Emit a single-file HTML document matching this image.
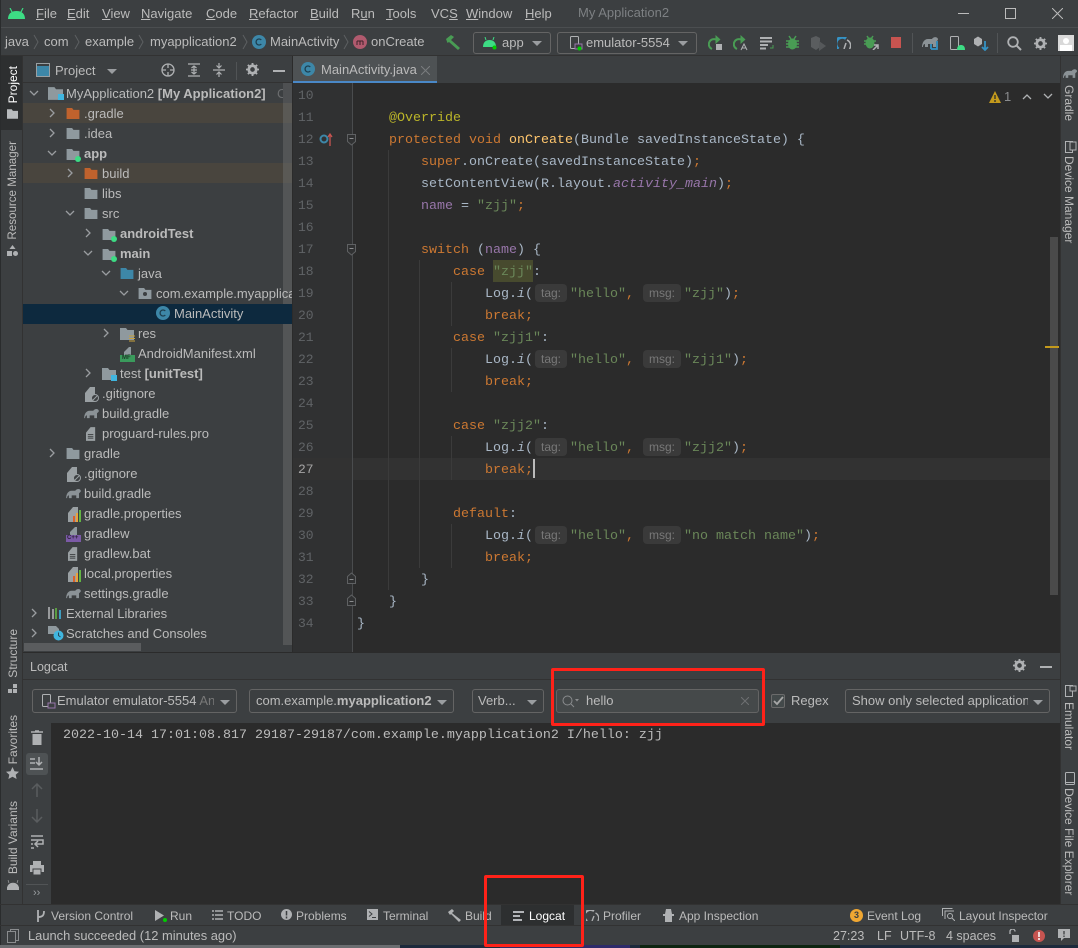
<!DOCTYPE html>
<html><head><meta charset="utf-8"><style>
html,body{margin:0;padding:0;background:#3c3f41}
#r{position:relative;width:1078px;height:948px;overflow:hidden;background:#3c3f41;font-family:"Liberation Sans",sans-serif;font-size:13px;color:#bbb}
#r div,#r span.t,#r svg{position:absolute}
.t{position:absolute;white-space:nowrap;line-height:22px;height:22px}
.bt{font-size:12px}
.st{font-size:12.5px}
.c{font-family:"Liberation Mono",monospace;font-size:13.33px;line-height:30px;height:30px;color:#a9b7c6}
.n{font-family:"Liberation Mono",monospace;font-size:13px;color:#606366;left:298px;line-height:24px;height:24px}
.k{color:#cc7832}.s{color:#6a8759}.f{color:#9876aa}.y{color:#ffc66d}.an{color:#bbb529}
.h{position:absolute;background:#3a3a3a;border-radius:4px;height:18px;color:#787878;font:12px/18px "Liberation Sans",sans-serif;text-align:center}
.v{position:absolute;writing-mode:vertical-rl;white-space:nowrap;font-size:12px;line-height:14px;color:#bbb}
.vr{transform:rotate(180deg)}
.dd{position:absolute;box-sizing:border-box;border:1px solid #646464;border-radius:3px;height:24px}
.tri{position:absolute;width:0;height:0;border-left:5px solid transparent;border-right:5px solid transparent;border-top:5px solid #9a9da0}
.g{position:absolute;width:1px;background:#3b3b3b}
.o{position:absolute;box-sizing:border-box;border:3px solid #ff2219;border-radius:2px}
u{text-decoration:underline}
b{font-weight:bold}
</style></head><body><div id="r">
<svg width="0" height="0" style="left:0;top:0"><defs>
<symbol id="fo" viewBox="0 0 14 12"><path d="M0 0h6l1.500 2H14v10H0z" fill="currentColor"/></symbol>
<symbol id="ar" viewBox="0 0 10 10"><path d="M3 1l4 4-4 4" fill="none" stroke="#9a9da0" stroke-width="1.300"/></symbol>
<symbol id="ad" viewBox="0 0 10 10"><path d="M1 3l4 4 4-4" fill="none" stroke="#9a9da0" stroke-width="1.300"/></symbol>
<symbol id="el" viewBox="0 0 16 12"><path d="M0 11C0 7 2 3 6 3h4c1-2 5-3 6 0 0 2-2 2-2 3v5h-3V8H6v3H3V8c-1 0-2 1-2 3z" fill="#8b9296"/></symbol>
<symbol id="fi" viewBox="0 0 12 15"><path d="M0 6l5-6h5v15H0z" fill="#9aa0a3"/><path d="M2 8h6M2 10h6M2 12h6" stroke="#3c3f41"/></symbol>
<symbol id="pr" viewBox="0 0 14 15"><path d="M0 6l5-6h5v15H0z" fill="#9aa0a3"/><path d="M5 9h2v6H5z" fill="#d9622b"/><path d="M8 6h2v9H8z" fill="#e8a33d"/><path d="M11 3h2v12h-2z" fill="#62b543"/></symbol>
<symbol id="gi" viewBox="0 0 14 15"><path d="M0 6l5-6h5v15H0z" fill="#9aa0a3"/><circle cx="10" cy="11" r="3.500" fill="#3c3f41" stroke="#9aa0a3"/><path d="M8 13l4-4" stroke="#9aa0a3"/></symbol>
<symbol id="cl" viewBox="0 0 14 14"><circle cx="7" cy="7" r="7" fill="#3d87a8"/><path d="M9.300 5A3 3 0 1 0 9.300 9" fill="none" stroke="#1d3e4f" stroke-width="1.300"/></symbol>
<symbol id="gear" viewBox="0 0 14 14"><circle cx="7" cy="7" r="4" fill="none" stroke="#afb1b3" stroke-width="3"/><path d="M7 0v14M0 7h14M2 2l10 10M12 2L2 12" stroke="#afb1b3" stroke-width="2" stroke-dasharray="2 10 2"/></symbol>
</defs></svg>

<!-- title bar -->
<div style="left:0;top:27px;width:1078px;height:1px;background:#4b4e50"></div>
<svg style="left:8px;top:8px" width="17" height="11" viewBox="0 0 17 11"><path d="M0 11C0 6 3 3 8.500 3S17 6 17 11z" fill="#3ddc84"/><path d="M4 4L2 0M13 4l2-4" stroke="#3ddc84" stroke-width="1.200"/></svg>
<span class="t" style="left:36px;top:3px"><u>F</u>ile</span>
<span class="t" style="left:67px;top:3px"><u>E</u>dit</span>
<span class="t" style="left:102px;top:3px"><u>V</u>iew</span>
<span class="t" style="left:141px;top:3px"><u>N</u>avigate</span>
<span class="t" style="left:206px;top:3px"><u>C</u>ode</span>
<span class="t" style="left:249px;top:3px"><u>R</u>efactor</span>
<span class="t" style="left:310px;top:3px"><u>B</u>uild</span>
<span class="t" style="left:351px;top:3px">R<u>u</u>n</span>
<span class="t" style="left:386px;top:3px"><u>T</u>ools</span>
<span class="t" style="left:431px;top:3px">VC<u>S</u></span>
<span class="t" style="left:466px;top:3px"><u>W</u>indow</span>
<span class="t" style="left:525px;top:3px"><u>H</u>elp</span>
<span class="t" style="left:578px;top:2px;color:#7d8083">My Application2</span>
<div style="left:958px;top:13px;width:11px;height:1px;background:#bbb"></div>
<div style="left:1005px;top:8px;width:9px;height:9px;border:1px solid #bbb"></div>
<svg style="left:1052px;top:8px" width="11" height="11"><path d="M0 0l11 11M11 0L0 11" stroke="#bbb"/></svg>

<!-- breadcrumb / toolbar -->
<span class="t" style="left:5px;top:31px">java</span>
<svg style="left:33px;top:34px" width="6" height="16"><path d="M1 1l4 7-4 7" fill="none" stroke="#5d6062"/></svg>
<span class="t" style="left:44px;top:31px">com</span>
<svg style="left:74px;top:34px" width="6" height="16"><path d="M1 1l4 7-4 7" fill="none" stroke="#5d6062"/></svg>
<span class="t" style="left:85px;top:31px">example</span>
<svg style="left:138px;top:34px" width="6" height="16"><path d="M1 1l4 7-4 7" fill="none" stroke="#5d6062"/></svg>
<span class="t" style="left:150px;top:31px">myapplication2</span>
<svg style="left:242px;top:34px" width="6" height="16"><path d="M1 1l4 7-4 7" fill="none" stroke="#5d6062"/></svg>
<svg style="left:252px;top:35px" width="14" height="14"><use href="#cl"/></svg>
<span class="t" style="left:270px;top:31px">MainActivity</span>
<svg style="left:343px;top:34px" width="6" height="16"><path d="M1 1l4 7-4 7" fill="none" stroke="#5d6062"/></svg>
<svg style="left:353px;top:35px" width="14" height="14"><circle cx="7" cy="7" r="7" fill="#b05a6e"/><path d="M4 10V6M7 10V6M10 10V6M4 6h6" stroke="#3c2229" fill="none"/></svg>
<span class="t" style="left:371px;top:31px">onCreate</span>
<svg style="left:445px;top:35px" width="16" height="15"><path d="M1 4L6 0l3 2-3 3 9 8-2 2L4 7 2.500 8z" fill="#499c54"/></svg>
<div class="dd" style="left:473px;top:32px;width:78px;height:22px"></div>
<svg style="left:483px;top:37px" width="14" height="13"><path d="M0 10C0 5 3 3 6.500 3S13 5 13 10z" fill="#3ddc84"/><path d="M3 3L2 0M10 3l1-3" stroke="#3ddc84"/><circle cx="11.500" cy="10.500" r="2" fill="#0c0"/></svg>
<span class="t" style="left:502px;top:32px">app</span>
<div class="tri" style="left:532px;top:41px"></div>
<div class="dd" style="left:557px;top:32px;width:140px;height:22px"></div>
<svg style="left:570px;top:36px" width="14" height="15"><rect x=".5" y=".5" width="8" height="12" rx="1" fill="none" stroke="#afb1b3"/><rect x="5" y="8" width="7" height="5" fill="#3c3f41" stroke="#9876aa"/><circle cx="9.500" cy="12.500" r="2" fill="#0c0"/></svg>
<span class="t" style="left:586px;top:32px">emulator-5554</span>
<div class="tri" style="left:678px;top:41px"></div>
<svg style="left:708px;top:35px" width="15" height="16"><path d="M8 4.500A5 5 0 1 0 4 14" fill="none" stroke="#499c54" stroke-width="2"/><path d="M7.500 0l5 4.500-5 4.500z" fill="#499c54"/><rect x="8" y="9" width="6" height="6" fill="#afb1b3"/></svg>
<svg style="left:733px;top:35px" width="15" height="16"><path d="M8 4.500A5 5 0 1 0 4 14" fill="none" stroke="#499c54" stroke-width="2"/><path d="M7.500 0l5 4.500-5 4.500z" fill="#499c54"/><path d="M8 15l3-6 3 6M9 13h4" fill="none" stroke="#afb1b3"/></svg>
<svg style="left:760px;top:37px" width="14" height="13"><path d="M0 1h12M0 4.500h12M0 8h8M0 11.500h6" stroke="#afb1b3" stroke-width="2"/><path d="M10 11h3V8" stroke="#499c54" fill="none"/></svg>
<svg style="left:786px;top:35px" width="13" height="15"><path d="M3 1l2 3M10 1L8 4M0 6h13M0 9h13M0 12h13" stroke="#499c54" stroke-width="1.500"/><ellipse cx="6.500" cy="9" rx="4.500" ry="5.500" fill="#499c54"/></svg>
<svg style="left:811px;top:36px" width="15" height="15"><path d="M0 2l5-2 4 2v9l-4 3-5-3z" fill="#5a5d5f"/><path d="M8 5l7 5-7 5z" fill="#55585a"/></svg>
<svg style="left:837px;top:37px" width="14" height="12"><path d="M1.500 12A6 6 0 0 1 9 1.500" fill="none" stroke="#3592c4" stroke-width="3"/><path d="M10 3a6 6 0 0 1 2.500 9M7 12l2-6" fill="none" stroke="#afb1b3" stroke-width="1.500"/></svg>
<svg style="left:864px;top:35px" width="15" height="15"><path d="M3 1l2 3M9 1L7 4M0 6h12M0 9h10" stroke="#499c54" stroke-width="1.500"/><ellipse cx="6" cy="8" rx="4.500" ry="5.500" fill="#499c54"/><path d="M9 15l5-5M10 10h4v4" stroke="#afb1b3" fill="none" stroke-width="1.500"/></svg>
<div style="left:891px;top:37px;width:10px;height:11px;background:#c75450"></div>
<div style="left:912px;top:33px;width:1px;height:20px;background:#515456"></div>
<svg style="left:922px;top:36px" width="16" height="12"><use href="#el"/></svg>
<svg style="left:930px;top:41px" width="9" height="10"><path d="M7 0v8H1M1 3v5" stroke="#3592c4" stroke-width="1.800" fill="none"/></svg>
<svg style="left:950px;top:36px" width="16" height="15"><rect x=".5" y=".5" width="8" height="13" rx="1" fill="none" stroke="#afb1b3"/><path d="M7 14c0-4 2-5 4-5s4 1 4 5z" fill="#3ddc84"/></svg>
<svg style="left:974px;top:36px" width="15" height="15"><path d="M0 3l4-2.500L8 3v5l-4 2.500L0 8z" fill="#afb1b3"/><path d="M11 5v9M8 11l3 3 3-3" stroke="#3592c4" stroke-width="1.800" fill="none"/></svg>
<div style="left:997px;top:33px;width:1px;height:20px;background:#515456"></div>
<svg style="left:1007px;top:36px" width="15" height="15"><circle cx="6" cy="6" r="4.800" fill="none" stroke="#afb1b3" stroke-width="1.800"/><path d="M9.500 9.500L14 14" stroke="#afb1b3" stroke-width="2"/></svg>
<svg style="left:1034px;top:37px" width="13" height="13"><use href="#gear"/></svg>
<div style="left:1058px;top:35px;width:16px;height:16px;background:#d9d9d9;overflow:hidden"><div style="left:5px;top:3px;width:6px;height:6px;border-radius:3px;background:#fff"></div><div style="left:2px;top:10px;width:12px;height:6px;background:#fff"></div></div>
<div style="left:0;top:55px;width:1078px;height:1px;background:#323232"></div>

<!-- left strip -->
<div style="left:0;top:56px;width:23px;height:74px;background:#2d2f30"></div>
<div style="left:22px;top:56px;width:1px;height:849px;background:#323232"></div>
<div style="left:0;top:0;width:1px;height:948px;background:#2a2c2d"></div>
<span class="v vr" style="left:6px;top:66px;color:#fff">Project</span>
<svg style="left:7px;top:109px" width="11" height="10" color="#b9bcbe"><use href="#fo"/></svg>
<span class="v vr" style="left:6px;top:141px;font-size:11.6px">Resource Manager</span>
<svg style="left:7px;top:245px" width="11" height="12"><path d="M5.500 0l3 4h-6z" fill="#afb1b3"/><rect y="6" width="5" height="5" fill="#afb1b3"/><circle cx="8.500" cy="8.500" r="2.500" fill="#afb1b3"/></svg>
<span class="v vr" style="left:6px;top:629px">Structure</span>
<svg style="left:8px;top:684px" width="10" height="10"><path d="M5 0h4v4H5zM0 5h4v4H0zM5 5h4v4H5z" fill="#afb1b3"/></svg>
<span class="v vr" style="left:6px;top:715px">Favorites</span>
<svg style="left:6px;top:767px" width="13" height="12"><path d="M6.500 0l2 4.200 4.500.6-3.300 3 .9 4.200-4.100-2.300L2.400 12l.9-4.200L0 4.800l4.500-.6z" fill="#afb1b3"/></svg>
<span class="v vr" style="left:6px;top:801px">Build Variants</span>
<svg style="left:7px;top:880px" width="12" height="10"><path d="M0 10C0 5 3 3 6 3s6 2 6 7zM2 3L1 0M10 3l1-3" fill="#afb1b3" stroke="#afb1b3" stroke-width=".6"/></svg>

<!-- right strip -->
<div style="left:1060px;top:56px;width:1px;height:849px;background:#323232"></div>
<svg style="left:1063px;top:68px" width="14" height="11" viewBox="0 0 16 12"><use href="#el"/></svg>
<span class="v" style="left:1062px;top:85px">Gradle</span>
<svg style="left:1065px;top:141px" width="12" height="12"><rect x=".5" y=".5" width="7" height="11" fill="none" stroke="#afb1b3"/><rect x="5" y="1" width="6" height="8" fill="#3c3f41" stroke="#afb1b3"/></svg>
<span class="v" style="left:1062px;top:156px">Device Manager</span>
<svg style="left:1065px;top:685px" width="12" height="12"><rect x=".5" y=".5" width="7" height="11" fill="none" stroke="#afb1b3"/><rect x="5" y="1" width="6" height="5" fill="#3c3f41" stroke="#afb1b3"/></svg>
<span class="v" style="left:1062px;top:702px">Emulator</span>
<svg style="left:1065px;top:772px" width="10" height="13"><rect x=".5" y=".5" width="9" height="12" rx="1" fill="none" stroke="#afb1b3"/><path d="M1 10.500h8" stroke="#afb1b3"/></svg>
<span class="v" style="left:1062px;top:788px">Device File Explorer</span>

<!-- project toolbar -->
<svg style="left:36px;top:63px" width="14" height="14"><rect x=".5" y=".5" width="13" height="13" fill="none" stroke="#9aa0a3"/><rect x="1" y="3" width="12" height="10" fill="#3d87a8"/></svg>
<span class="t" style="left:55px;top:60px">Project</span>
<div class="tri" style="left:107px;top:69px"></div>
<svg style="left:161px;top:63px" width="14" height="14"><circle cx="7" cy="7" r="6" fill="none" stroke="#afb1b3" stroke-width="1.300"/><path d="M7 1v4M7 9v4M1 7h4M9 7h4" stroke="#afb1b3" stroke-width="1.300"/></svg>
<svg style="left:187px;top:63px" width="14" height="14"><path d="M1 1h12M1 13h12M7 3v8M4.500 5L7 3l2.500 2M4.500 9L7 11l2.500-2M4 7h6" stroke="#afb1b3" fill="none" stroke-width="1.200"/></svg>
<svg style="left:212px;top:63px" width="14" height="14"><path d="M1 7h12M7 0v4.500M4.500 2.500L7 5l2.500-2.500M7 14V9.500M4.500 11.500L7 9l2.500 2.500" stroke="#afb1b3" fill="none" stroke-width="1.200"/></svg>
<div style="left:236px;top:62px;width:1px;height:18px;background:#515456"></div>
<svg style="left:246px;top:63px" width="13" height="13"><use href="#gear"/></svg>
<div style="left:273px;top:70px;width:12px;height:2px;background:#afb1b3"></div>
<div style="left:23px;top:82px;width:270px;height:1px;background:#323232"></div>

<!-- tree -->
<div style="left:23px;top:103px;width:269px;height:20px;background:#49453e"></div>
<div style="left:23px;top:163px;width:269px;height:20px;background:#49453e"></div>
<div style="left:283px;top:85px;width:9px;height:560px;background:rgba(110,112,114,.45)"></div>
<div style="left:23px;top:304px;width:269px;height:20px;background:#0d293e"></div>
<div style="left:24px;top:643px;width:117px;height:8px;background:#5a5c5e"></div>
<div style="left:292px;top:56px;width:1px;height:597px;background:#2b2b2b"></div>

<svg style="left:29px;top:88px" width="10" height="10"><use href="#ad"/></svg>
<svg style="left:48px;top:87px" width="15" height="13" color="#8f999e"><use href="#fo"/></svg><div style="left:58px;top:94px;width:6px;height:6px;background:#40b6e0"></div>
<span class="t" style="left:66px;top:83px">MyApplication2 <b>[My Application2]</b></span>
<span class="t" style="left:277px;top:83px;color:#6a6c6e">C:</span>
<div style="left:283px;top:83px;width:9px;height:20px;background:#4e5052"></div>

<svg style="left:47px;top:108px" width="10" height="10"><use href="#ar"/></svg>
<svg style="left:66px;top:108px" width="14" height="11" color="#c0622d"><use href="#fo"/></svg>
<span class="t" style="left:84px;top:103px">.gradle</span>
<svg style="left:47px;top:128px" width="10" height="10"><use href="#ar"/></svg>
<svg style="left:66px;top:128px" width="14" height="11" color="#8f999e"><use href="#fo"/></svg>
<span class="t" style="left:84px;top:123px">.idea</span>
<svg style="left:47px;top:148px" width="10" height="10"><use href="#ad"/></svg>
<svg style="left:66px;top:149px" width="14" height="11" color="#8f999e"><use href="#fo"/></svg><div style="left:75px;top:156px;width:6px;height:6px;border-radius:3px;background:#3ddc84"></div>
<span class="t" style="left:84px;top:143px"><b>app</b></span>
<svg style="left:65px;top:168px" width="10" height="10"><use href="#ar"/></svg>
<svg style="left:84px;top:168px" width="14" height="11" color="#c0622d"><use href="#fo"/></svg>
<span class="t" style="left:102px;top:163px">build</span>
<svg style="left:84px;top:188px" width="14" height="11" color="#8f999e"><use href="#fo"/></svg>
<span class="t" style="left:102px;top:183px">libs</span>
<svg style="left:65px;top:208px" width="10" height="10"><use href="#ad"/></svg>
<svg style="left:84px;top:208px" width="14" height="11" color="#8f999e"><use href="#fo"/></svg>
<span class="t" style="left:102px;top:203px">src</span>
<svg style="left:83px;top:228px" width="10" height="10"><use href="#ar"/></svg>
<svg style="left:102px;top:229px" width="14" height="11" color="#8f999e"><use href="#fo"/></svg><div style="left:111px;top:236px;width:6px;height:6px;border-radius:3px;background:#3ddc84"></div>
<span class="t" style="left:120px;top:223px"><b>androidTest</b></span>
<svg style="left:83px;top:248px" width="10" height="10"><use href="#ad"/></svg>
<svg style="left:102px;top:249px" width="14" height="11" color="#8f999e"><use href="#fo"/></svg><div style="left:111px;top:256px;width:6px;height:6px;border-radius:3px;background:#3ddc84"></div>
<span class="t" style="left:120px;top:243px"><b>main</b></span>
<svg style="left:101px;top:268px" width="10" height="10"><use href="#ad"/></svg>
<svg style="left:120px;top:268px" width="14" height="11" color="#3d87a8"><use href="#fo"/></svg>
<span class="t" style="left:138px;top:263px">java</span>
<svg style="left:119px;top:288px" width="10" height="10"><use href="#ad"/></svg>
<svg style="left:138px;top:288px" width="14" height="11" color="#8f999e"><use href="#fo"/></svg><div style="left:143px;top:292px;width:4px;height:4px;border-radius:2px;background:#3c3f41"></div>
<div style="left:156px;top:283px;width:136px;height:22px;overflow:hidden"><span class="t" style="left:0;top:0">com.example.myapplication2</span></div>
<svg style="left:156px;top:306px" width="14" height="14"><use href="#cl"/></svg>
<span class="t" style="left:174px;top:303px;color:#bbb">MainActivity</span>
<svg style="left:101px;top:328px" width="10" height="10"><use href="#ar"/></svg>
<svg style="left:120px;top:328px" width="14" height="12" color="#8f999e"><use href="#fo"/></svg><svg style="left:129px;top:335px" width="6" height="7"><path d="M0 1h6M0 3.500h6M0 6h6" stroke="#c9a13a"/></svg>
<span class="t" style="left:138px;top:323px">res</span>
<svg style="left:120px;top:347px" width="15" height="15"><path d="M4 5l5-5h2v8H4z" fill="#8f999e"/><rect y="8" width="15" height="7" fill="#3a9a5c"/></svg>
<span class="t" style="left:122px;top:355px;font:bold 6px/7px 'Liberation Sans',sans-serif;height:7px;color:#1e3b28">MF</span>
<span class="t" style="left:138px;top:343px">AndroidManifest.xml</span>
<svg style="left:83px;top:368px" width="10" height="10"><use href="#ar"/></svg>
<svg style="left:102px;top:368px" width="14" height="12" color="#8f999e"><use href="#fo"/></svg><div style="left:111px;top:375px;width:6px;height:6px;background:#40b6e0"></div>
<span class="t" style="left:120px;top:363px">test <b>[unitTest]</b></span>
<svg style="left:85px;top:387px" width="14" height="15"><use href="#gi"/></svg>
<span class="t" style="left:102px;top:383px">.gitignore</span>
<svg style="left:84px;top:408px" width="15" height="11"><use href="#el"/></svg>
<span class="t" style="left:102px;top:403px">build.gradle</span>
<svg style="left:86px;top:427px" width="11" height="14"><use href="#fi"/></svg>
<span class="t" style="left:102px;top:423px">proguard-rules.pro</span>
<svg style="left:47px;top:448px" width="10" height="10"><use href="#ar"/></svg>
<svg style="left:66px;top:448px" width="14" height="11" color="#8f999e"><use href="#fo"/></svg>
<span class="t" style="left:84px;top:443px">gradle</span>
<svg style="left:67px;top:467px" width="14" height="15"><use href="#gi"/></svg>
<span class="t" style="left:84px;top:463px">.gitignore</span>
<svg style="left:66px;top:488px" width="15" height="11"><use href="#el"/></svg>
<span class="t" style="left:84px;top:483px">build.gradle</span>
<svg style="left:68px;top:507px" width="14" height="15"><use href="#pr"/></svg>
<span class="t" style="left:84px;top:503px">gradle.properties</span>
<svg style="left:66px;top:527px" width="15" height="15"><path d="M4 5l5-5h2v8H4z" fill="#8f999e"/><rect y="8" width="15" height="7" fill="#7b5aa6"/></svg>
<span class="t" style="left:67px;top:535px;font:bold 6px/7px 'Liberation Sans',sans-serif;height:7px;color:#2c2238">C++</span>
<span class="t" style="left:84px;top:523px">gradlew</span>
<svg style="left:68px;top:547px" width="11" height="14"><use href="#fi"/></svg>
<span class="t" style="left:84px;top:543px">gradlew.bat</span>
<svg style="left:68px;top:567px" width="14" height="15"><use href="#pr"/></svg>
<span class="t" style="left:84px;top:563px">local.properties</span>
<svg style="left:66px;top:588px" width="15" height="11"><use href="#el"/></svg>
<span class="t" style="left:84px;top:583px">settings.gradle</span>
<svg style="left:29px;top:608px" width="10" height="10"><use href="#ar"/></svg>
<svg style="left:48px;top:607px" width="14" height="12"><path d="M1 0v12M5 2v10" stroke="#afb1b3" stroke-width="1.600"/><path d="M8 1v11" stroke="#62b543" stroke-width="1.600"/><path d="M12 3v9" stroke="#40b6e0" stroke-width="1.600"/></svg>
<span class="t" style="left:66px;top:603px">External Libraries</span>
<svg style="left:29px;top:628px" width="10" height="10"><use href="#ar"/></svg>
<svg style="left:48px;top:626px" width="16" height="15"><path d="M0 0h8l3 3v5H0z" fill="#8f999e"/><circle cx="10.500" cy="9.500" r="5" fill="#40b6e0"/><path d="M10.500 6.500v3l2 1.500" stroke="#27465a" fill="none"/></svg>
<span class="t" style="left:66px;top:623px">Scratches and Consoles</span>

<!-- tabs -->
<div style="left:293px;top:56px;width:144px;height:25px;background:#4e5254"></div>
<div style="left:293px;top:81px;width:144px;height:2px;background:#4a88c7"></div>
<svg style="left:301px;top:62px" width="14" height="14"><use href="#cl"/></svg>
<span class="t" style="left:321px;top:59px">MainActivity.java</span>
<svg style="left:421px;top:66px" width="9" height="9"><path d="M0 0l9 9M9 0L0 9" stroke="#7a7d7f"/></svg>

<!-- editor -->
<div style="left:293px;top:83px;width:767px;height:570px;background:#2b2b2b"></div>
<div style="left:293px;top:83px;width:59px;height:570px;background:#303132"></div>
<div style="left:352px;top:83px;width:1px;height:570px;background:#4a4c4e"></div>
<div style="left:293px;top:458px;width:59px;height:22px;background:#323232"></div>
<div style="left:353px;top:458px;width:697px;height:22px;background:#323232"></div>
<div class="g" style="left:388px;top:150px;height:440px"></div>
<div class="g" style="left:419px;top:260px;height:308px"></div>
<div class="g" style="left:451px;top:282px;height:44px"></div>
<div class="g" style="left:451px;top:348px;height:44px"></div>
<div class="g" style="left:451px;top:436px;height:44px"></div>
<div class="g" style="left:451px;top:524px;height:44px"></div>

<span class="t n" style="top:84px">10</span><span class="t n" style="top:106px">11</span><span class="t n" style="top:128px">12</span><span class="t n" style="top:150px">13</span><span class="t n" style="top:172px">14</span><span class="t n" style="top:194px">15</span><span class="t n" style="top:216px">16</span><span class="t n" style="top:238px">17</span><span class="t n" style="top:260px">18</span><span class="t n" style="top:282px">19</span><span class="t n" style="top:304px">20</span><span class="t n" style="top:326px">21</span><span class="t n" style="top:348px">22</span><span class="t n" style="top:370px">23</span><span class="t n" style="top:392px">24</span><span class="t n" style="top:414px">25</span><span class="t n" style="top:436px">26</span><span class="t n" style="top:458px;color:#a4a3a3">27</span><span class="t n" style="top:480px">28</span><span class="t n" style="top:502px">29</span><span class="t n" style="top:524px">30</span><span class="t n" style="top:546px">31</span><span class="t n" style="top:568px">32</span><span class="t n" style="top:590px">33</span><span class="t n" style="top:612px">34</span>

<svg style="left:319px;top:132px" width="14" height="14"><circle cx="5" cy="7" r="3.500" fill="none" stroke="#3d87a8" stroke-width="2"/><path d="M11 14V3M9 5l2-3 2 3" stroke="#c75450" fill="none" stroke-width="1.300"/></svg>
<svg style="left:347px;top:134px" width="10" height="12"><path d="M.5.500h8v7l-4 3.500-4-3.500z" fill="#303132" stroke="#5f6163"/><path d="M2.500 4.500h4" stroke="#8a8c8e"/></svg>
<svg style="left:347px;top:244px" width="10" height="12"><path d="M.5.500h8v7l-4 3.500-4-3.500z" fill="#303132" stroke="#5f6163"/><path d="M2.500 4.500h4" stroke="#8a8c8e"/></svg>
<svg style="left:347px;top:572px" width="10" height="12"><path d="M.5 11.500h8v-7L4.500 1 .5 4.500z" fill="#303132" stroke="#5f6163"/><path d="M2.500 7.500h4" stroke="#8a8c8e"/></svg>
<svg style="left:347px;top:594px" width="10" height="12"><path d="M.5 11.500h8v-7L4.500 1 .5 4.500z" fill="#303132" stroke="#5f6163"/><path d="M2.500 7.500h4" stroke="#8a8c8e"/></svg>

<span class="t c an" style="left:389px;top:104px">@Override</span>
<span class="t c" style="left:389px;top:126px"><span class="k">protected void</span> <span class="y">onCreate</span>(Bundle savedInstanceState) {</span>
<span class="t c" style="left:421px;top:148px"><span class="k">super</span>.onCreate(savedInstanceState)<span class="k">;</span></span>
<span class="t c" style="left:421px;top:170px">setContentView(R.layout.<i class="f">activity_main</i>)<span class="k">;</span></span>
<span class="t c" style="left:421px;top:192px"><span class="f">name</span> = <span class="s">"zjj"</span><span class="k">;</span></span>
<span class="t c" style="left:421px;top:236px"><span class="k">switch</span> (<span class="f">name</span>) {</span>
<div style="left:493px;top:260px;width:40px;height:22px;background:#474a2e"></div>
<span class="t c" style="left:453px;top:258px"><span class="k">case</span> <span class="s">"zjj"</span>:</span>
<span class="t c" style="left:485px;top:280px">Log.<i>i</i>(</span><div class="h" style="left:535px;top:284px;width:32px">tag:</div><span class="t c s" style="left:570px;top:280px">"hello"<span class="k">,</span></span><div class="h" style="left:643px;top:284px;width:38px">msg:</div><span class="t c" style="left:684px;top:280px"><span class="s">"zjj"</span>)<span class="k">;</span></span>
<span class="t c k" style="left:485px;top:302px">break;</span>
<span class="t c" style="left:453px;top:324px"><span class="k">case</span> <span class="s">"zjj1"</span>:</span>
<span class="t c" style="left:485px;top:346px">Log.<i>i</i>(</span><div class="h" style="left:535px;top:350px;width:32px">tag:</div><span class="t c s" style="left:570px;top:346px">"hello"<span class="k">,</span></span><div class="h" style="left:643px;top:350px;width:38px">msg:</div><span class="t c" style="left:684px;top:346px"><span class="s">"zjj1"</span>)<span class="k">;</span></span>
<span class="t c k" style="left:485px;top:368px">break;</span>
<span class="t c" style="left:453px;top:412px"><span class="k">case</span> <span class="s">"zjj2"</span>:</span>
<span class="t c" style="left:485px;top:434px">Log.<i>i</i>(</span><div class="h" style="left:535px;top:438px;width:32px">tag:</div><span class="t c s" style="left:570px;top:434px">"hello"<span class="k">,</span></span><div class="h" style="left:643px;top:438px;width:38px">msg:</div><span class="t c" style="left:684px;top:434px"><span class="s">"zjj2"</span>)<span class="k">;</span></span>
<span class="t c k" style="left:485px;top:456px">break;</span>
<div style="left:533px;top:459px;width:2px;height:19px;background:#bbb"></div>
<span class="t c" style="left:453px;top:500px"><span class="k">default</span>:</span>
<span class="t c" style="left:485px;top:522px">Log.<i>i</i>(</span><div class="h" style="left:535px;top:526px;width:32px">tag:</div><span class="t c s" style="left:570px;top:522px">"hello"<span class="k">,</span></span><div class="h" style="left:643px;top:526px;width:38px">msg:</div><span class="t c" style="left:684px;top:522px"><span class="s">"no match name"</span>)<span class="k">;</span></span>
<span class="t c k" style="left:485px;top:544px">break;</span>
<span class="t c" style="left:421px;top:566px">}</span>
<span class="t c" style="left:389px;top:588px">}</span>
<span class="t c" style="left:357px;top:610px">}</span>

<svg style="left:989px;top:91px" width="12" height="12"><path d="M6 0l6 12H0z" fill="#c49a1c"/><path d="M6 4v4M6 9v2" stroke="#2b2b2b" stroke-width="1.300"/></svg>
<span class="t" style="left:1004px;top:86px;color:#8a8c8e">1</span>
<svg style="left:1022px;top:93px" width="10" height="7"><path d="M1 6l4-4 4 4" fill="none" stroke="#afb1b3" stroke-width="1.300"/></svg>
<svg style="left:1043px;top:93px" width="10" height="7"><path d="M1 1l4 4 4-4" fill="none" stroke="#afb1b3" stroke-width="1.300"/></svg>
<div style="left:1050px;top:237px;width:8px;height:358px;background:#4a4a4a"></div>
<div style="left:1045px;top:346px;width:14px;height:2px;background:#c49a1c"></div>

<!-- logcat -->
<div style="left:23px;top:652px;width:1037px;height:1px;background:#2b2b2b"></div>
<span class="t st" style="left:30px;top:656px">Logcat</span>
<svg style="left:1013px;top:659px" width="13" height="13"><use href="#gear"/></svg>
<div style="left:1040px;top:666px;width:12px;height:2px;background:#afb1b3"></div>
<div style="left:23px;top:679px;width:1037px;height:1px;background:#323232"></div>

<div class="dd" style="left:32px;top:689px;width:205px"></div>
<svg style="left:42px;top:694px" width="14" height="15"><rect x=".5" y=".5" width="8" height="12" rx="1" fill="none" stroke="#afb1b3"/><rect x="6" y="9" width="7" height="5" fill="#3c3f41" stroke="#9876aa"/></svg>
<div style="left:57px;top:690px;width:157px;height:22px;overflow:hidden"><span class="t" style="left:0;top:0">Emulator emulator-5554 <span style="color:#787878">Android</span></span></div>
<div class="tri" style="left:220px;top:700px"></div>
<div class="dd" style="left:249px;top:689px;width:205px"></div>
<span class="t" style="left:256px;top:690px">com.example.<b>myapplication2</b></span>
<div class="tri" style="left:437px;top:700px"></div>
<div class="dd" style="left:472px;top:689px;width:72px"></div>
<span class="t" style="left:478px;top:690px">Verb...</span>
<div class="tri" style="left:527px;top:700px"></div>
<div class="dd" style="left:556px;top:689px;width:203px;background:#45494a"></div>
<svg style="left:562px;top:695px" width="18" height="13"><circle cx="5.500" cy="5.500" r="4.500" fill="none" stroke="#8a8c8e"/><path d="M9 9l3 3" stroke="#8a8c8e"/><path d="M13 4h4l-2 2.500z" fill="#8a8c8e"/></svg>
<span class="t" style="left:586px;top:690px">hello</span>
<svg style="left:741px;top:697px" width="8" height="8"><path d="M0 0l8 8M8 0L0 8" stroke="#6e7072"/></svg>
<div style="left:771px;top:694px;width:12px;height:12px;border:1px solid #6b6b6b;border-radius:2px;background:#43494a"></div>
<svg style="left:773px;top:696px" width="11" height="10"><path d="M1 5l3 3 6-7" fill="none" stroke="#a7a7a7" stroke-width="1.800"/></svg>
<span class="t" style="left:791px;top:690px">Regex</span>
<div class="dd" style="left:845px;top:689px;width:205px"></div>
<div style="left:852px;top:690px;width:176px;height:22px;overflow:hidden"><span class="t" style="left:0;top:0">Show only selected application</span></div>
<div class="tri" style="left:1033px;top:700px"></div>

<div style="left:51px;top:723px;width:1009px;height:181px;background:#2b2b2b"></div>
<span class="t c" style="left:63px;top:721px;color:#bbb">2022-10-14 17:01:08.817 29187-29187/com.example.myapplication2 I/hello: zjj</span>
<svg style="left:31px;top:730px" width="12" height="15"><path d="M0 2h12M4 1h4" stroke="#afb1b3" stroke-width="1.500"/><path d="M1.500 4h9v11h-9z" fill="#afb1b3"/></svg>
<div style="left:26px;top:753px;width:22px;height:22px;background:#4e5254;border-radius:3px"></div>
<svg style="left:30px;top:756px" width="14" height="15"><path d="M0 3h5M0 7h5M0 13h13M9 1v8M6 6l3 3 3-3" stroke="#afb1b3" fill="none" stroke-width="1.500"/></svg>
<svg style="left:31px;top:783px" width="12" height="14"><path d="M6 14V2M1 6l5-5 5 5" stroke="#5a5d5f" fill="none" stroke-width="1.500"/></svg>
<svg style="left:31px;top:809px" width="12" height="14"><path d="M6 0v12M1 8l5 5 5-5" stroke="#5a5d5f" fill="none" stroke-width="1.500"/></svg>
<svg style="left:30px;top:835px" width="14" height="15"><path d="M1 1h12M1 5h12v4H6M1 9h2M1 13h3" stroke="#afb1b3" fill="none" stroke-width="1.500"/><path d="M8 6l-3 3 3 3" stroke="#afb1b3" fill="none" stroke-width="1.500"/></svg>
<svg style="left:30px;top:861px" width="14" height="14"><path d="M3 0h8v4H3zM0 4h14v7H0z" fill="#afb1b3"/><rect x="3" y="8" width="8" height="6" fill="#afb1b3" stroke="#3c3f41"/></svg>
<div style="left:26px;top:884px;width:22px;height:1px;background:#515456"></div>
<span class="t" style="left:33px;top:882px;font-size:11px;color:#9a9da0">››</span>

<!-- bottom tool bar -->
<div style="left:0;top:904px;width:1078px;height:1px;background:#323232"></div>
<svg style="left:36px;top:909px" width="10" height="14"><path d="M2 1v12M2 8c5 0 6-2 6-6" stroke="#afb1b3" fill="none" stroke-width="1.800"/></svg>
<span class="t bt" style="left:51px;top:905px">Version Control</span>
<svg style="left:155px;top:909px" width="13" height="14"><path d="M0 1l9 5.500L0 12z" fill="#afb1b3"/><circle cx="10" cy="11" r="2" fill="#0c0"/></svg>
<span class="t bt" style="left:170px;top:905px">Run</span>
<svg style="left:212px;top:910px" width="11" height="10"><path d="M0 1h2M0 5h2M0 9h2M3 1h8M3 5h8M3 9h8" stroke="#afb1b3" stroke-width="1.500"/></svg>
<span class="t bt" style="left:227px;top:905px">TODO</span>
<svg style="left:281px;top:909px" width="11" height="11"><circle cx="5.500" cy="5.500" r="5.500" fill="#afb1b3"/><path d="M5.500 2v4.500M5.500 7.500v2" stroke="#3c3f41" stroke-width="1.500"/></svg>
<span class="t bt" style="left:296px;top:905px">Problems</span>
<svg style="left:367px;top:909px" width="11" height="11"><rect width="11" height="11" fill="#afb1b3"/><path d="M2 2.500l3 2.500-3 2.500M5 8.500h4" stroke="#3c3f41" fill="none"/></svg>
<span class="t bt" style="left:383px;top:905px">Terminal</span>
<svg style="left:448px;top:909px" width="13" height="13"><path d="M0 3l4-3 2 2-2 2 9 7-2 2-8-8-1 1z" fill="#afb1b3"/></svg>
<span class="t bt" style="left:465px;top:905px">Build</span>
<div style="left:501px;top:905px;width:73px;height:20px;background:#2d2f30"></div>
<svg style="left:513px;top:911px" width="11" height="10"><path d="M0 1h11M0 5h7M0 9h9" stroke="#dfe1e5" stroke-width="1.500"/></svg>
<span class="t bt" style="left:529px;top:905px;color:#fff">Logcat</span>
<svg style="left:586px;top:910px" width="13" height="11"><path d="M1.200 11A5.500 5.500 0 0 1 8 1" fill="none" stroke="#afb1b3" stroke-width="2"/><path d="M9.500 3a5.500 5.500 0 0 1 2.300 8M6 11l2-5" fill="none" stroke="#afb1b3" stroke-width="1.300"/></svg>
<span class="t bt" style="left:603px;top:905px">Profiler</span>
<svg style="left:663px;top:909px" width="11" height="13"><path d="M3 0h5l1 5h2v2H9v6H2V7H0V5h2z" fill="#afb1b3"/></svg>
<span class="t bt" style="left:679px;top:905px">App Inspection</span>
<div style="left:850px;top:909px;width:13px;height:13px;border-radius:7px;background:#f0a732;color:#3c3f41;font:bold 9px/13px 'Liberation Sans',sans-serif;text-align:center">3</div>
<span class="t bt" style="left:867px;top:905px">Event Log</span>
<svg style="left:942px;top:908px" width="13" height="13"><path d="M.5 8V.5h10M3 11V3h9" stroke="#afb1b3" fill="none"/><circle cx="8" cy="8" r="2.500" fill="#3c3f41" stroke="#afb1b3"/><path d="M10 10l3 3" stroke="#afb1b3"/></svg>
<span class="t bt" style="left:959px;top:905px">Layout Inspector</span>
<div style="left:0;top:925px;width:1078px;height:1px;background:#323232"></div>

<!-- status bar -->
<svg style="left:7px;top:929px" width="12" height="14"><rect x="3.500" y=".5" width="8" height="11" fill="none" stroke="#8a8c8e"/><rect x=".5" y="2.500" width="8" height="11" fill="#3c3f41" stroke="#8a8c8e"/></svg>
<span class="t" style="left:28px;top:925px;font-size:12.9px">Launch succeeded (12 minutes ago)</span>
<span class="t st" style="left:833px;top:925px">27:23</span>
<span class="t st" style="left:877px;top:925px">LF</span>
<span class="t st" style="left:900px;top:925px">UTF-8</span>
<span class="t st" style="left:946px;top:925px">4 spaces</span>
<svg style="left:1008px;top:929px" width="12" height="13"><path d="M2 5V2.500a2.500 2.500 0 0 1 5 0" fill="none" stroke="#afb1b3" stroke-width="1.300"/><rect x="4" y="6" width="7" height="7" fill="#afb1b3"/></svg>
<svg style="left:1033px;top:930px" width="12" height="12"><circle cx="6" cy="6" r="6" fill="#c75450"/><path d="M6 2v5M6 8v2" stroke="#fff" stroke-width="1.500"/></svg>
<svg style="left:1058px;top:929px" width="12" height="12"><path d="M0 0h12v9H6l-3 3V9H0z" fill="#afb1b3"/><path d="M6 2v3.500M6 6.500v1.500" stroke="#3c3f41" stroke-width="1.300"/></svg>
<div style="left:0;top:945px;width:1078px;height:3px;background:#1d2a3c"></div>
<div style="left:0;top:945px;width:400px;height:3px;background:#6b6d70"></div>
<div style="left:500px;top:945px;width:130px;height:3px;background:#2e2b6a"></div>
<div style="left:640px;top:945px;width:200px;height:3px;background:#0d2410"></div>

<!-- annotation boxes -->
<div class="o" style="left:551px;top:668px;width:214px;height:58px"></div>
<div class="o" style="left:484px;top:875px;width:100px;height:72px"></div>
</div></body></html>
